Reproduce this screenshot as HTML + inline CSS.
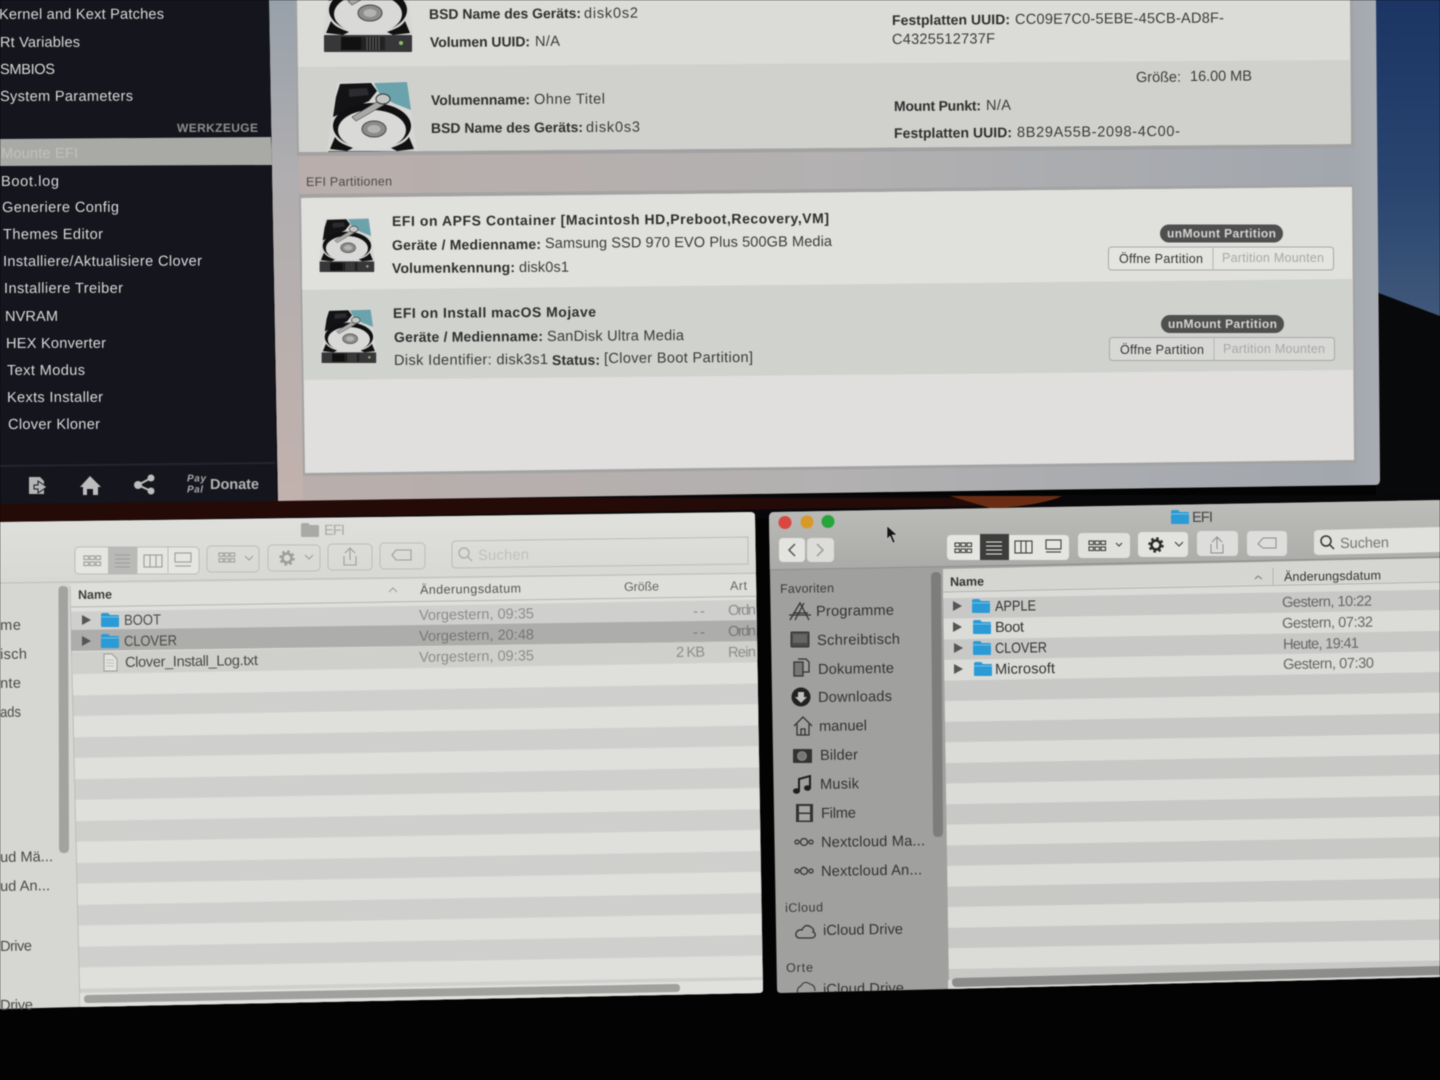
<!DOCTYPE html>
<html lang="de"><head><meta charset="utf-8"><title>EFI</title>
<style>
html,body{margin:0;padding:0;background:#030304;width:1440px;height:1080px;overflow:hidden}
svg{display:block;position:absolute;left:0;top:0;filter:blur(.5px)}
text{font-family:"Liberation Sans",sans-serif;dominant-baseline:central;font-size:14.6px;transform-box:fill-box;transform-origin:0 50%}
.m text{fill:#d9d9d7;transform:translateY(1px) rotate(-.1deg)}
.a text{fill:#3c3c3c;transform:translateY(1px) rotate(-.4deg)}
.a .b{font-weight:700;fill:#2f2f2f;font-size:14px;transform:rotate(-.4deg)}
.l text{fill:#4a4a48;transform:translateY(1px) rotate(-.9deg)}
.l .d{fill:#8c8c8a}
.r text{fill:#333;transform:translateY(1px) rotate(-.9deg)}
.r .d{fill:#666}
.ir{fill:none;stroke:#3c3c3c;stroke-width:1.1}
.il{fill:none;stroke:#9d9d9b;stroke-width:1.1}
</style></head><body>
<svg width="1440" height="1080" viewBox="0 0 1440 1080" xmlns="http://www.w3.org/2000/svg">
<defs>
<linearGradient id="blue" x1="0" y1="0" x2="0" y2="1"><stop offset="0" stop-color="#1c3564"/><stop offset=".6" stop-color="#2a4670"/><stop offset="1" stop-color="#41597a"/></linearGradient>
<linearGradient id="win" x1="0" y1="0" x2="1" y2="0"><stop offset="0" stop-color="#bdb0ad"/><stop offset=".03" stop-color="#b9aeab"/><stop offset=".5" stop-color="#b3b1b1"/><stop offset=".97" stop-color="#a2a7ae"/><stop offset="1" stop-color="#a9adb3"/></linearGradient>
<linearGradient id="wl" x1="0" y1="0" x2="0" y2="1"><stop offset="0" stop-color="#98a1aa"/><stop offset=".35" stop-color="#b0aeb0"/><stop offset="1" stop-color="#c2b2ad"/></linearGradient>
<linearGradient id="ltb" x1="0" y1="0" x2="0" y2="1"><stop offset="0" stop-color="#e0e0dc"/><stop offset="1" stop-color="#d6d6d3"/></linearGradient>
<linearGradient id="rtb" x1="0" y1="0" x2="0" y2="1"><stop offset="0" stop-color="#bdbdba"/><stop offset="1" stop-color="#aaaaa8"/></linearGradient>
<pattern id="ls" width="1000" height="41.9" patternUnits="userSpaceOnUse" patternTransform="translate(100 695) rotate(-1)"><rect width="1000" height="41.9" fill="#dfdfdc"/><rect width="1000" height="20.6" fill="#cfd0cd"/></pattern>
<pattern id="rs" width="1000" height="41.2" patternUnits="userSpaceOnUse" patternTransform="translate(950 763) rotate(-1)"><rect width="1000" height="41.2" fill="#dbdbd8"/><rect width="1000" height="20.4" fill="#c8c9c6"/></pattern>
<clipPath id="cl"><path d="M0 522L750 512Q755 512 755 516L763 989Q763 993 759 993L80 1007 0 1009Z"/></clipPath>
<clipPath id="cr"><path d="M774 512L1440 500V977L949 989 781 993Q777 993 777 989L769 518Q769 512 774 512Z"/></clipPath>
<clipPath id="p1"><path d="M297 0H1350L1351 144 299 152Z"/></clipPath>
<g id="disk">
<path d="M10 1L80 0 84 30 90 68 90 86 1 87 0 68 5 34Z" fill="#d6d6d4"/>
<path d="M13 3L44 2 50 10 42 20 20 30 6 36 9 16Z" fill="#131315"/>
<path d="M22 8L40 7 42 14 22 16Z" fill="#2c2c30"/>
<path d="M47 2L80 1 84 29 66 22 53 14Z" fill="#6ba3ad"/>
<ellipse cx="45" cy="45" rx="39" ry="23" fill="#101012"/>
<ellipse cx="45" cy="49" rx="34" ry="20" fill="#d9d9d7"/>
<path d="M3 68L8 56C12 62 18 64 26 67L20 70ZM87 68L82 56C78 62 72 64 64 67L70 70Z" fill="#111"/>
<ellipse cx="47" cy="48" rx="12" ry="8" fill="#8c8d8b" stroke="#444"/>
<ellipse cx="47" cy="48" rx="6.500" ry="4" fill="#b3b3b1"/>
<path d="M25 36L56 17 62 21 29 40Z" fill="#a9a9a7" stroke="#444" stroke-width=".6"/>
<ellipse cx="56" cy="18" rx="7" ry="5" fill="#c4c4c2" stroke="#333"/>
<rect x="1" y="70" width="88" height="17" rx="1" fill="#37373a"/>
<rect x="18" y="72" width="20" height="13" fill="#111"/><rect x="38" y="72" width="24" height="13" fill="#222"/>
<path d="M44 72V85M47 72V85M50 72V85M53 72V85M56 72V85" stroke="#777" stroke-width=".8"/>
<circle cx="78" cy="78" r="2" fill="#84c760"/>
</g>
<g id="fold"><path d="M0 3Q0 1 2 1H7L9 3H17Q18 3 18 5V14Q18 15 17 15H1Q0 15 0 14Z" fill="#2a9bd5"/><path d="M0 5H18" stroke="#74bfe3"/></g>
<g id="gfold"><path d="M0 3Q0 1 2 1H7L9 3H17Q18 3 18 5V14Q18 15 17 15H1Q0 15 0 14Z" fill="#a9a9a7"/></g>
<g id="grid"><rect x="0" y="0" width="4.500" height="3.500"/><rect x="6" y="0" width="4.500" height="3.500"/><rect x="12" y="0" width="4.500" height="3.500"/><rect x="0" y="6" width="4.500" height="3.500"/><rect x="6" y="6" width="4.500" height="3.500"/><rect x="12" y="6" width="4.500" height="3.500"/></g>
</defs>

<rect width="1440" height="1080" fill="#030304"/>
<!-- desktop -->
<rect x="1370" y="0" width="70" height="320" fill="url(#blue)"/>
<path d="M1376 292L1440 316V500H1376Z" fill="#08090b"/>
<path d="M0 495H1440V512L0 525Z" fill="#08070a"/>
<path d="M0 498H1060L1030 505 0 522Z" fill="#240b08"/>
<path d="M950 496H1062C1045 504 1010 508 990 508Z" fill="#6a2d13"/>

<!-- app window -->
<path d="M269 0H1376L1380 480Q1380 485 1375 485L278 501Z" fill="url(#win)"/>
<path d="M269 0H297L303 499 278 501Z" fill="url(#wl)"/>
<path d="M295 0H1353L1355 148 297 156Z" fill="#a2a2a3"/>
<path d="M297 0H1350L1351 144 299 152Z" fill="#dbdbd7"/>
<path d="M298 67L1350 60 1351 144 299 152Z" fill="#d0d1cd"/>
<path d="M299 194L1354 184 1357 463 303 476Z" fill="#a3a3a4"/>
<path d="M301 198L1352 187 1354 460 305 473Z" fill="#e0dfdd"/>
<path d="M302 198L1352 187V279L302 289Z" fill="#e0e0dc"/>
<path d="M303 290L1352 279 1353 370 304 380Z" fill="#d0d2ce"/>

<!-- disks -->
<g clip-path="url(#p1)">
<use href="#disk" transform="translate(323 -35)"/>
<use href="#disk" transform="translate(327 81)"/>
</g>
<use href="#disk" transform="translate(319 218) scale(.62)"/>
<use href="#disk" transform="translate(321 309) scale(.62)"/>

<g class="a">
<text x="429" y="14" class="b" textLength="152">BSD Name des Geräts:</text><text x="584" y="13" textLength="54">disk0s2</text>
<text x="430" y="42" class="b" textLength="100">Volumen UUID:</text><text x="535" y="41" textLength="25">N/A</text>
<text x="892" y="20" class="b" textLength="118">Festplatten UUID:</text><text x="1015" y="19" textLength="209">CC09E7C0-5EBE-45CB-AD8F-</text>
<text x="892" y="39" textLength="103">C4325512737F</text>
<text x="1136" y="77" textLength="45">Größe:</text><text x="1190" y="76" textLength="62">16.00 MB</text>
<text x="431" y="100" class="b" textLength="99">Volumenname:</text><text x="534" y="99" textLength="71">Ohne Titel</text>
<text x="431" y="128" class="b" textLength="152">BSD Name des Geräts:</text><text x="586" y="127" textLength="54">disk0s3</text>
<text x="894" y="106" class="b" textLength="87">Mount Punkt:</text><text x="986" y="105" textLength="25">N/A</text>
<text x="894" y="133" class="b" textLength="118">Festplatten UUID:</text><text x="1017" y="132" textLength="163">8B29A55B-2098-4C00-</text>
<text x="306" y="181" style="font-size:12.500px;fill:#4a4a4a" textLength="86">EFI Partitionen</text>
<text x="392" y="221" class="b" textLength="437">EFI on APFS Container [Macintosh HD,Preboot,Recovery,VM]</text>
<text x="392" y="245" class="b" textLength="149">Geräte / Medienname:</text><text x="545" y="243" textLength="287">Samsung SSD 970 EVO Plus 500GB Media</text>
<text x="392" y="268" class="b" textLength="123">Volumenkennung:</text><text x="519" y="267" textLength="50">disk0s1</text>
<text x="393" y="313" class="b" textLength="203">EFI on Install macOS Mojave</text>
<text x="394" y="337" class="b" textLength="149">Geräte / Medienname:</text><text x="547" y="336" textLength="137">SanDisk Ultra Media</text>
<text x="394" y="360" textLength="154">Disk Identifier: disk3s1</text><text x="552" y="360" class="b" textLength="48">Status:</text><text x="604" y="358" textLength="149">[Clover Boot Partition]</text>

<rect x="1160" y="224.500" width="123" height="18" rx="9" fill="#4f4f4f"/>
<text x="1167" y="233.500" textLength="109" style="font-size:12px;font-weight:700;fill:#d5d5d3;transform:none">unMount Partition</text>
<rect x="1108.500" y="247" width="225" height="23" rx="3" fill="#e4e4e1" stroke="#a9a9a7"/><path d="M1213 247V270" stroke="#b5b5b3"/>
<text x="1119" y="259" textLength="84" style="font-size:12.500px;fill:#333;transform:none">Öffne Partition</text>
<text x="1222" y="258" textLength="102" style="font-size:12.500px;fill:#a8a8a6;transform:none">Partition Mounten</text>
<rect x="1161" y="315" width="123" height="18" rx="9" fill="#4f4f4f"/>
<text x="1168" y="324" textLength="109" style="font-size:12px;font-weight:700;fill:#d5d5d3;transform:none">unMount Partition</text>
<rect x="1109.500" y="337.500" width="225" height="23" rx="3" fill="#d8d9d6" stroke="#a9a9a7"/><path d="M1214 338V361" stroke="#b5b5b3"/>
<text x="1120" y="350" textLength="84" style="font-size:12.500px;fill:#333;transform:none">Öffne Partition</text>
<text x="1223" y="349" textLength="102" style="font-size:12.500px;fill:#a8a8a6;transform:none">Partition Mounten</text>
</g>

<!-- dark sidebar -->
<path d="M0 0H269L277 501 0 504Z" fill="#14151d"/>
<path d="M0 139L271 137 272 165 0 166Z" fill="#a9a9a6"/>
<path d="M0 465L275 462V464L0 467Z" fill="#24252d"/>
<g class="m">
<text x="-1" y="14" textLength="165">Kernel and Kext Patches</text>
<text x="0" y="42" textLength="80">Rt Variables</text>
<text x="0" y="69" textLength="55">SMBIOS</text>
<text x="0" y="96" textLength="133">System Parameters</text>
<text x="177" y="127" textLength="81" style="font-size:12px;font-weight:700;fill:#8e8e8d">WERKZEUGE</text>
<text x="1" y="153" textLength="77" style="fill:#c0c0bd">Mounte EFI</text>
<text x="1" y="181" textLength="58">Boot.log</text>
<text x="2" y="207" textLength="117">Generiere Config</text>
<text x="3" y="234" textLength="100">Themes Editor</text>
<text x="3" y="261" textLength="199">Installiere/Aktualisiere Clover</text>
<text x="4" y="288" textLength="119">Installiere Treiber</text>
<text x="5" y="316" textLength="53">NVRAM</text>
<text x="6" y="343" textLength="100">HEX Konverter</text>
<text x="7" y="370" textLength="78">Text Modus</text>
<text x="7" y="397" textLength="96">Kexts Installer</text>
<text x="8" y="424" textLength="92">Clover Kloner</text>
<text x="210" y="484" textLength="49" style="font-weight:700;fill:#b5b5b5">Donate</text>
<text x="187" y="478" textLength="19" style="font-size:10px;font-weight:700;font-style:italic;fill:#a8a8a8">Pay</text>
<text x="187" y="489" textLength="16" style="font-size:10px;font-weight:700;font-style:italic;fill:#a8a8a8">Pal</text>
</g>
<path d="M29 477H40L44 481V494H29Z" fill="#b5b5b5"/><path d="M47 487L38 481V485H34V489H38V493Z" fill="#b5b5b5" stroke="#14151d"/>
<path d="M90 476L101 487H98V495H93V489H87V495H83V487H80Z" fill="#bdbdbd"/>
<circle cx="151" cy="478" r="3.500" fill="#bdbdbd"/><circle cx="138" cy="485" r="4" fill="#bdbdbd"/><circle cx="151" cy="491" r="3.500" fill="#bdbdbd"/><path d="M151 478L138 485 151 491" fill="none" stroke="#bdbdbd" stroke-width="2"/>

<!-- left finder -->
<g clip-path="url(#cl)">
<rect x="0" y="500" width="780" height="520" fill="#d6d6d3"/>
<path d="M0 522L760 512V580L0 590Z" fill="url(#ltb)"/>
<path d="M70 604L770 590V1010H80Z" fill="url(#ls)"/>
<path d="M70 584L770 574V597L70 605Z" fill="#dededa"/>
<path d="M70 607L770 596" stroke="#b5b5b3"/>
<path d="M0 583L770 573" stroke="#bcbcba"/>
<path d="M70 586L80 1010" stroke="#bcbcba"/>
<path d="M71 630L770 620V641L71 651Z" fill="#adadab"/>
<path d="M72 652L770 641V662L72 672Z" fill="#cfcfcc"/>
<path d="M58.500 590Q58.500 586 63 586 68 586 68 590L69 848Q69 853 64 853 59 853 59 848Z" fill="#a2a2a0"/>
<path d="M80 993L770 980V1010H80Z" fill="#e0e0dd"/>
<path d="M88 995L676 984Q680 984 680 988 680 992 676 992L88 1003Q84 1003 84 999 84 995 88 995Z" fill="#a0a09e"/>
</g>
<g fill="none" stroke="#bcbcba">
<rect x="75" y="547" width="124" height="27" rx="4" fill="#e5e5e2"/><rect x="108" y="547" width="29" height="27" fill="#b9b9b7" stroke="none"/>
<path d="M137 547V574M168 546V573"/>
<rect x="207" y="546" width="52" height="26" rx="4"/><rect x="268" y="545" width="52" height="26" rx="4"/>
<rect x="328" y="544" width="44" height="26" rx="4"/><rect x="380" y="543" width="45" height="26" rx="4"/>
<path d="M456 541L748 537V564L456 568Q452 568 452 564V545Q452 541 456 541Z"/>
</g>
<g class="il">
<use href="#grid" transform="translate(84 556)"/>
<path d="M115 555H130M115 559H130M115 563H130M115 567H130"/>
<rect x="144" y="555" width="18" height="12"/><path d="M150 555V567M156 555V567"/>
<rect x="175" y="553" width="16" height="9"/><path d="M175 566H191"/>
<use href="#grid" transform="translate(219 553) scale(.95)"/><path d="M245 556L249 560 253 556"/>
<path d="M305 555L309 559 313 555"/>
<path d="M345 553L350 548 355 553M350 548V560M344 556V565H356V556"/>
<path d="M392 555L396 550H411V560H396Z"/>
</g>
<circle cx="287" cy="558" r="6.500" fill="none" stroke="#9d9d9b" stroke-width="2.500" stroke-dasharray="2.500 2.600"/>
<circle cx="287" cy="558" r="4.500" fill="none" stroke="#9d9d9b" stroke-width="2.500"/>
<circle cx="464" cy="553" r="5" fill="none" stroke="#b0b0ae" stroke-width="1.500"/><path d="M468 557L472 561" stroke="#b0b0ae" stroke-width="1.500"/>
<use href="#gfold" transform="translate(301 522)"/>
<g class="l">
<text x="324" y="530" textLength="21" style="fill:#a9a9a7">EFI</text>
<text x="478" y="555" textLength="51" style="fill:#c0c0be">Suchen</text>
<text x="78" y="594" textLength="34" style="font-size:12.500px;font-weight:700;fill:#3e3e3e">Name</text>
<text x="420" y="589" textLength="101" style="font-size:12.500px;fill:#555">Änderungsdatum</text>
<text x="624" y="586" textLength="35" style="font-size:12.500px;fill:#666">Größe</text>
<text x="730" y="585" textLength="17" style="font-size:12.500px;fill:#666">Art</text>
<text x="124" y="620" textLength="37" lengthAdjust="spacingAndGlyphs">BOOT</text>
<text x="124" y="641" textLength="53" lengthAdjust="spacingAndGlyphs">CLOVER</text>
<text x="125" y="662" textLength="133">Clover_Install_Log.txt</text>
<text x="419" y="615" class="d" textLength="115">Vorgestern, 09:35</text>
<text x="419" y="636" class="d" textLength="115" style="fill:#777">Vorgestern, 20:48</text>
<text x="419" y="657" class="d" textLength="115">Vorgestern, 09:35</text>
<text x="693" y="611" class="d" textLength="12">--</text>
<text x="693" y="632" class="d" textLength="12" style="fill:#777">--</text>
<text x="676" y="652" class="d" textLength="29">2 KB</text>
<text x="728" y="610" class="d" textLength="28">Ordn</text>
<text x="728" y="631" class="d" textLength="28" style="fill:#777">Ordn</text>
<text x="728" y="652" class="d" textLength="28">Rein</text>
<text x="0" y="625" textLength="21">me</text>
<text x="0" y="654" textLength="27">isch</text>
<text x="0" y="683" textLength="21">nte</text>
<text x="0" y="712" textLength="21" lengthAdjust="spacingAndGlyphs">ads</text>
<text x="0" y="857" textLength="53">ud Mä...</text>
<text x="0" y="886" textLength="50">ud An...</text>
<text x="0" y="946" textLength="32">Drive</text>
<text x="0" y="1005" textLength="33">Drive</text>
</g>
<path d="M82 615L91 620 82 625Z" fill="#555"/><path d="M82 636L91 641 82 646Z" fill="#555"/>
<use href="#fold" transform="translate(101 612)"/><use href="#fold" transform="translate(101 633)"/>
<path d="M104 654H112L117 659V671H104Z" fill="#e3e3e0" stroke="#9a9a98"/>
<path d="M106 660H114M106 663H114M106 666H114" stroke="#b5b5b3" stroke-width=".8"/>
<path d="M389 592L393 588 397 592" fill="none" stroke="#9d9d9b"/>

<!-- right finder -->
<g clip-path="url(#cr)">
<rect x="760" y="495" width="680" height="510" fill="#a0a09e"/>
<path d="M765 512L1440 500V557L765 570Z" fill="url(#rtb)"/>
<path d="M943 590L1440 580V990H949Z" fill="url(#rs)"/>
<path d="M943 569L1440 558V580L943 591Z" fill="#d5d5d2"/>
<path d="M765 570L1440 557" stroke="#8e8e8c"/>
<path d="M943 592L1440 582" stroke="#b0b0ae"/>
<path d="M948 980L1440 968V990H948Z" fill="#d7d7d4"/>
<path d="M957 978L1440 966V975L957 987Q952 987 952 982 952 978 957 978Z" fill="#8c8c8a"/>
<path d="M931 577Q931 572 936 572 941 572 941 577L943 832Q943 837 938 837 933 837 933 832Z" fill="#7d7d7b"/>
</g>
<circle cx="785" cy="522.500" r="6.500" fill="#d9473e"/><circle cx="807" cy="522" r="6.500" fill="#d79a2a"/><circle cx="828" cy="521.500" r="6.500" fill="#27a53b"/>
<rect x="779" y="538" width="26" height="24" rx="4" fill="#e3e3e0"/><rect x="807" y="538" width="27" height="24" rx="4" fill="#dcdcd9"/>
<path d="M795 544L789 550 795 556" fill="none" stroke="#555" stroke-width="1.500"/><path d="M817 544L823 550 817 556" fill="none" stroke="#9a9a98" stroke-width="1.500"/>
<path d="M887 526L887 539 890 536 893 543 895 542 892 535 897 535Z" fill="#151515" stroke="#ddd" stroke-width=".5"/>
<rect x="947" y="535" width="122" height="25" rx="4" fill="#e5e5e2"/><rect x="980" y="534" width="29" height="26" fill="#3d3d3c"/>
<rect x="1078" y="533" width="52" height="25" rx="4" fill="#e0e0dd"/><rect x="1138" y="532" width="50" height="25" rx="4" fill="#e3e3e0"/>
<rect x="1197" y="531" width="41" height="25" rx="4" fill="#dddddb"/><rect x="1247" y="531" width="40" height="25" rx="4" fill="#dddddb"/>
<path d="M1319 530L1440 527V552L1319 555Q1314 555 1314 551V534Q1314 530 1319 530Z" fill="#e0e0dd"/>
<g stroke="#e8e8e5" fill="none"><path d="M986 542H1002M986 546H1002M986 550H1002M986 554H1002"/></g>
<g class="ir">
<use href="#grid" transform="translate(955 543)"/>
<rect x="1015" y="541" width="17" height="12"/><path d="M1021 541V553M1026 541V553"/>
<rect x="1046" y="540" width="15" height="9"/><path d="M1046 552H1061"/>
<use href="#grid" transform="translate(1089 541)"/><path d="M1116 543L1119 546 1122 543"/>
<path d="M1175 542L1179 546 1183 542"/>
</g>
<circle cx="1156" cy="545" r="6.500" fill="none" stroke="#2a2a2a" stroke-width="2.500" stroke-dasharray="2.500 2.600"/>
<circle cx="1156" cy="545" r="4.500" fill="none" stroke="#2a2a2a" stroke-width="2.500"/>
<g fill="none" stroke="#8d8d8b"><path d="M1212 542L1217 537 1222 542M1217 537V549M1211 544V553H1223V544"/><path d="M1258 544L1263 538H1276V548H1263Z"/></g>
<circle cx="1326" cy="541" r="5" fill="none" stroke="#333" stroke-width="1.500"/><path d="M1330 545L1334 549" stroke="#333" stroke-width="1.500"/>
<use href="#fold" transform="translate(1171 509)"/>
<g class="r">
<text x="1192" y="517" textLength="21" style="fill:#444">EFI</text>
<text x="1340" y="543" textLength="49" style="fill:#777">Suchen</text>
<text x="780" y="588" textLength="54" style="font-size:12.500px;fill:#3a3a3a">Favoriten</text>
<text x="816" y="611" textLength="78">Programme</text>
<text x="817" y="640" textLength="83">Schreibtisch</text>
<text x="818" y="669" textLength="76">Dokumente</text>
<text x="818" y="697" textLength="74">Downloads</text>
<text x="819" y="726" textLength="48">manuel</text>
<text x="820" y="755" textLength="38">Bilder</text>
<text x="820" y="784" textLength="39">Musik</text>
<text x="821" y="813" textLength="35">Filme</text>
<text x="821" y="842" textLength="104">Nextcloud Ma...</text>
<text x="821" y="871" textLength="101">Nextcloud An...</text>
<text x="785" y="907" textLength="38" style="font-size:12.500px;fill:#3a3a3a">iCloud</text>
<text x="823" y="930" textLength="80">iCloud Drive</text>
<text x="786" y="967" textLength="27" style="font-size:12.500px;fill:#3a3a3a">Orte</text>
<text x="950" y="581" textLength="34" style="font-size:12.500px;font-weight:700">Name</text>
<text x="1284" y="576" textLength="97" style="font-size:12.500px">Änderungsdatum</text>
<text x="995" y="606" textLength="41" lengthAdjust="spacingAndGlyphs">APPLE</text>
<text x="995" y="627" textLength="29">Boot</text>
<text x="995" y="648" textLength="52" lengthAdjust="spacingAndGlyphs">CLOVER</text>
<text x="995" y="669" textLength="60">Microsoft</text>
<text x="1282" y="602" class="d" textLength="90">Gestern, 10:22</text>
<text x="1282" y="623" class="d" textLength="91">Gestern, 07:32</text>
<text x="1283" y="644" class="d" textLength="76">Heute, 19:41</text>
<text x="1283" y="664" class="d" textLength="91">Gestern, 07:30</text>
</g>
<g clip-path="url(#cr)"><g class="r"><text x="823" y="989" textLength="81">iCloud Drive</text></g>
<path d="M798 994Q796 988 801 986 804 980 810 984 815 985 815 991" fill="none" stroke="#333"/></g>
<path d="M1255 579L1258 576 1262 579" fill="none" stroke="#777"/>
<path d="M1273 568V585" stroke="#b5b5b3"/>
<path d="M953 601L962 606 953 611Z M953 622L962 627 953 632Z M954 643L963 648 954 653Z M954 664L963 669 954 674Z" fill="#555"/>
<use href="#fold" transform="translate(972 598)"/><use href="#fold" transform="translate(973 619)"/><use href="#fold" transform="translate(973 640)"/><use href="#fold" transform="translate(974 661)"/>
<!-- right sidebar icons -->
<g fill="none" stroke="#333" stroke-width="1.300">
<path d="M790 620L800 603 809 620M793 613H808M789 615H811M804 603L795 620"/>
<path d="M794 662H803V676H794Z" fill="#777"/><path d="M798 659H806L809 662V672H803"/>
<path d="M794 726L803 717 812 726M797 724V735H809V724M801 735V729H805V735"/>
<circle cx="804" cy="842" r="3.500"/><circle cx="797" cy="842" r="2"/><circle cx="811" cy="842" r="2"/>
<circle cx="804" cy="871" r="3.500"/><circle cx="797" cy="871" r="2"/><circle cx="811" cy="871" r="2"/>
<path d="M799 938Q795 937 796 933 798 929 802 930 805 923 811 927 815 930 813 932 816 933 815 936 814 938 811 938Z"/>
</g>
<rect x="791" y="632" width="18" height="15" rx="1" fill="#4a4a4a" stroke="#333"/><rect x="793" y="634" width="14" height="9" fill="#666"/>
<circle cx="801" cy="697" r="9.500" fill="#222"/><path d="M798 692H804V697H807L801 703 795 697H798Z" fill="#c0c0be"/>
<rect x="793" y="749" width="19" height="14" rx="1" fill="#333"/><circle cx="802" cy="756" r="4.500" fill="#777" stroke="#aaa" stroke-width=".6"/>
<path d="M799 791V779L810 776V788" fill="none" stroke="#1e1e1e" stroke-width="2"/>
<ellipse cx="796.500" cy="791" rx="3.500" ry="2.800" fill="#1e1e1e"/><ellipse cx="807.500" cy="788" rx="3.500" ry="2.800" fill="#1e1e1e"/>
<rect x="796" y="804" width="17" height="18" fill="#333"/><rect x="799" y="806" width="11" height="6.500" fill="#a5a5a3"/><rect x="799" y="814" width="11" height="6.500" fill="#a5a5a3"/>
</svg>
</body></html>
